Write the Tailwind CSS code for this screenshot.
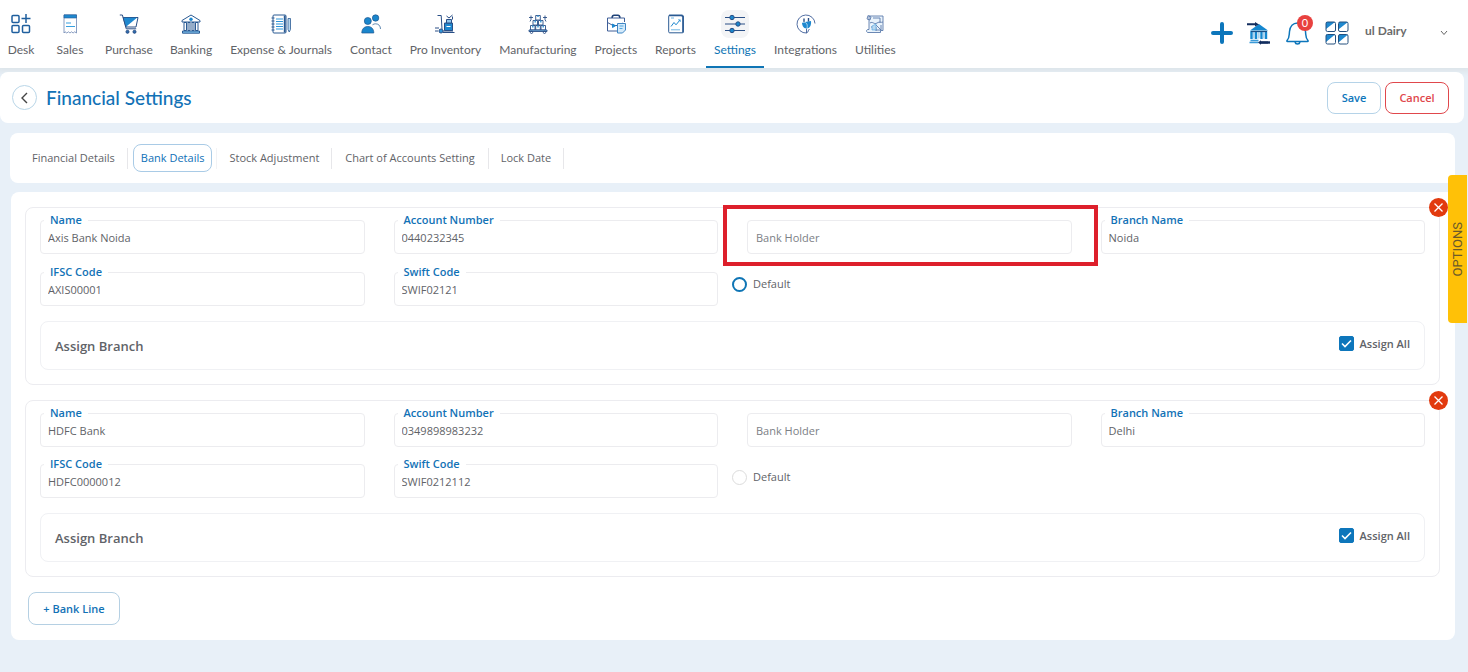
<!DOCTYPE html>
<html lang="en">
<head>
<meta charset="utf-8">
<meta name="viewport" content="width=device-width, initial-scale=1">
<title>Financial Settings</title>
<script src="https://cdn.jsdelivr.net/npm/@tailwindcss/browser@4"></script>
</head>
<body class="min-h-screen bg-[#e8f0f8] font-['Open_Sans','Noto_Sans',sans-serif] text-[11px] leading-4 text-[#5f6368]">

<header class="flex h-[68px] justify-between bg-white font-[Lato,sans-serif] text-[12px] shadow-[0_0_6px_4px_#dde5ea]">
  <nav aria-label="Main" class="flex gap-[2px]">
    <a href="#" class="flex flex-col items-center gap-1 px-[7px] pt-[10px]">
      <span class="grid size-7 place-items-center"><svg class="size-5" viewBox="0 0 20 20" fill="none" stroke="#1f5f9e" stroke-width="1.500"><rect x="1" y="1.500" width="7" height="7" rx="1"/><rect x="1" y="11.500" width="7" height="7" rx="1"/><rect x="11.500" y="11.500" width="7" height="7" rx="1"/><path d="M15 0v9M10.500 4.500h9"/></svg></span>Desk</a>
    <a href="#" class="flex flex-col items-center gap-1 px-3 pt-[10px]">
      <span class="grid size-7 place-items-center"><svg class="size-5" viewBox="0 0 20 20" fill="none"><path d="M4 1h12.500v18l-1.800-1.200-1.600 1.200-1.600-1.200L10 19l-1.600-1.200L6.800 19 5 17.800 4 19z" stroke="#6d87b3" stroke-width=".8"/><path d="M4 .8h12.500V4H4z" fill="#1e88cf" stroke="#2a5a93" stroke-width=".6"/><path d="M6 9h5M6 12.500h9" stroke="#37a0e0" stroke-width="1.200"/></svg></span>Sales</a>
    <a href="#" class="flex flex-col items-center gap-1 px-[7px] pt-[10px]">
      <span class="grid size-7 place-items-center"><svg class="size-5" viewBox="0 0 20 20" fill="none" stroke="#2a4f86" stroke-width="1"><path d="M4.200 3.500h14.800l-2 9.500H7z"/><path d="M4.500 3.800h13.500L7 12.800z" fill="#1e88cf" stroke="none"/><path d="M.8 1h2.600l3.800 13.800h10"/><circle cx="8.500" cy="17.800" r="1.500" fill="#2a6cb0"/><circle cx="15.500" cy="17.800" r="1.500" fill="#2a6cb0"/></svg></span>Purchase</a>
    <a href="#" class="flex flex-col items-center gap-1 px-2 pt-[10px]">
      <span class="grid size-7 place-items-center"><svg class="size-5" viewBox="0 0 20 20" fill="none" stroke="#2a5a93" stroke-width="1"><path d="M1 8V6.500l9-5.500 9 5.500V8z"/><circle cx="10" cy="5.300" r="1.700" fill="#1e88cf" stroke="none"/><path d="M3 8.500h2.500v8H3zM7 8.500h2v8H7zM11 8.500h2v8h-2zM14.500 8.500H17v8h-2.500z"/><path d="M1.500 17h17v2.200h-17z" fill="#7cc0ec"/></svg></span>Banking</a>
    <a href="#" class="flex flex-col items-center gap-1 px-2 pt-[10px]">
      <span class="grid size-7 place-items-center"><svg class="size-5" viewBox="0 0 20 20" fill="none" stroke="#2a5a93" stroke-width="1"><rect x="2" y="1" width="13" height="18" rx="1"/><path d="M13.700 1.500v17" stroke-width="1.800"/><path d="M5 5h7M5 7.500h7M5 10h7M5 12.500h7M5 15h7" stroke="#2f95d8"/><path d="M.5 4h3M.5 7h3M.5 10h3M.5 13h3M.5 16h3"/><path d="M17 4.500h2.500v11L18.200 18 17 15.500z" stroke-width=".8" fill="#b9d8f0"/></svg></span>Expense &amp; Journals</a>
    <a href="#" class="flex flex-col items-center gap-1 px-2 pt-[10px]">
      <span class="grid size-7 place-items-center"><svg class="size-5" viewBox="0 0 20 20" fill="#1a86cc" stroke="#20588f" stroke-width=".7"><circle cx="14.600" cy="4" r="3.200"/><circle cx="6.800" cy="7" r="3.500"/><path d="M.8 19c0-4 2.200-6.500 6-6.500s6 2.500 6 6.500z"/><path d="M11.500 10.800c1-.8 2-1 3.200-1 3 0 4.800 2.200 4.800 5.200" fill="none"/></svg></span>Contact</a>
    <a href="#" class="flex flex-col items-center gap-1 px-2 pt-[10px]">
      <span class="grid size-7 place-items-center"><svg class="size-5" viewBox="0 0 20 20" fill="none" stroke="#2a4f86" stroke-width="1"><path d="M2.500 1.500h3.700l.8 13.500"/><circle cx="6" cy="17" r="2" fill="#2f95d8"/><path d="M8 18.500h11.500M0 14h4M0 17h3M8 17h10"/><path d="M9.500 9h8v7.500h-8z" fill="#1e88cf"/><path d="M11.500 5.500h5v3.500h-5z" fill="#8fc6ec"/><path d="M11.500 2l2.500 2 3.500-3M17.500 2.500v3"/><path d="M11.500 12.500h4" stroke="#fff"/></svg></span>Pro Inventory</a>
    <a href="#" class="flex flex-col items-center gap-1 px-2 pt-[10px]">
      <span class="grid size-7 place-items-center"><svg class="size-5" viewBox="0 0 20 20" fill="none" stroke="#2a4f86" stroke-width=".9"><path d="M7.700 1.500h4.600v4.500H7.700zM5 6.500h4.500V11H5zM10.500 6.500H15V11h-4.500zM2.500 11.500H7V16H2.500zM7.700 11.500h4.600V16H7.700zM13 11.500h4.500V16H13z"/><path d="M10 1.500V3M7.200 6.500v2M12.800 6.500v2M4.800 11.500v2M10 11.500v2M15.200 11.500v2" stroke="#2f95d8" stroke-width="1.400"/><path d="M1 16h18v1.500H1z" fill="#7cc0ec"/><circle cx="3.500" cy="18.300" r="1.200"/><circle cx="16.500" cy="18.300" r="1.200"/><path d="M1 3.500h4M3 1.500v4l-1 2M15 3.500h4M17 1.500v4l1 2"/></svg></span>Manufacturing</a>
    <a href="#" class="flex flex-col items-center gap-1 px-2 pt-[10px]">
      <span class="grid size-7 place-items-center"><svg class="size-5" viewBox="0 0 20 20" fill="none" stroke="#3f5f98" stroke-width="1"><path d="M11 17H1.500V4h17v4"/><path d="M6 3.800C6.300 1.800 7 1.300 8 1.300h4c1 0 1.700.5 2 2.500" stroke="#1f4378" stroke-width="1.600"/><path d="M1.500 8.500L7 11.500h6L17 9" /><path d="M6.500 10l3 1.700-3 1.800z" fill="#1e88cf" stroke="#1e88cf"/><path d="M11.500 9.500h8V16l-3 3h-5z" fill="#d4eafa" stroke="#3f86c4"/><path d="M13.500 12h4M13.500 14.500h3" stroke="#2f95d8" stroke-width=".8"/></svg></span>Projects</a>
    <a href="#" class="flex flex-col items-center gap-1 px-2 pt-[10px]">
      <span class="grid size-7 place-items-center"><svg class="size-5" viewBox="0 0 20 20" fill="none" stroke="#2a5a93"><rect x="2.700" y="1.200" width="14.600" height="17.600" rx="1"/><path d="M3 1.500h12.500l1.500 1.200V18.500" stroke-width="1.600"/><path d="M5 12.500l3-4 2 2.300L14 6" stroke="#1e88cf"/><path d="M12 5.800h2.300V8M5 15.800h9M5 4h3" stroke="#4aa3dd" stroke-width=".8"/></svg></span>Reports</a>
    <a href="#" aria-current="page" class="flex flex-col items-center gap-1 border-b-2 border-[#0f75b5] px-2 pt-[10px] text-[#0f75b5]">
      <span class="grid size-7 place-items-center rounded-lg bg-[#f3f4f6]"><svg class="size-5" viewBox="0 0 20 20" fill="#1a86cc" stroke="#2a4f86" stroke-width="1"><path d="M0 3.500h20M0 10h20M0 16.500h20"/><circle cx="7" cy="3.500" r="2.200"/><circle cx="13" cy="10" r="2.200"/><circle cx="7" cy="16.500" r="2.200"/></svg></span>Settings</a>
    <a href="#" class="flex flex-col items-center gap-1 px-2 pt-[10px]">
      <span class="grid size-7 place-items-center"><svg class="size-5" viewBox="0 0 20 20" fill="none" stroke="#3f5f98" stroke-width=".9"><path d="M10.500 19v-4.500M10.500 19A9 9 0 1 1 19 9.500"/><path d="M10.500 19c2.500-1 1-2.500 3-4"/><path d="M6 8.500l9-1.500c.5 4-1.200 7.500-4.500 7.500S6 11 6 8.500z" fill="#1e88cf" stroke="none"/><path d="M8 4.500V8M12.500 4v3.500" stroke-width="1.400" stroke="#2a4f86"/><path d="M6 8.500c4-1 6 1 5 6" stroke="#fff" stroke-width=".6"/></svg></span>Integrations</a>
    <a href="#" class="flex flex-col items-center gap-1 px-2 pt-[10px]">
      <span class="grid size-7 place-items-center"><svg class="size-5" viewBox="0 0 20 20" fill="none" stroke="#5b7bab" stroke-width=".9"><path d="M4 2h14v14.500h-2.500V18.500H2.500c-1.500-1-1-2.500 0-3H4z" fill="#e9f3fb"/><path d="M3 1.500l3 1.500-1 3-3-1zM8 4h7v5M5 9c3-2 4 2 7 0s4 0 6-1M6 13h5v4M11 11l5 5M16 11v5h-5"/><path d="M7 12l4-2v6H7z" fill="#b9d8f0" stroke="#4aa3dd" stroke-width=".6"/></svg></span>Utilities</a>
  </nav>

  <div class="flex items-start pt-5 pr-5">
    <button type="button" aria-label="Add" class="mt-[2px] mr-[14px]"><svg class="size-[22px]" viewBox="0 0 22 22" stroke="#0d76bb" stroke-width="4" stroke-linecap="round"><path d="M11 2v18M2 11h18"/></svg></button>
    <button type="button" aria-label="Bank transfer" class="mt-[2px] mr-4"><svg class="size-[23px]" viewBox="0 0 23 23" fill="none"><path d="M3 8.500L12 2l9 6.500z" fill="#1587cf"/><path d="M4.500 9v8M9 9v8M14.500 9v8M19 9v8" stroke="#1587cf" stroke-width="2.400"/><path d="M7 9.500v7M11.700 9.500v7M16.800 9.500v7" stroke="#a9d3ef" stroke-width="2"/><path d="M4 9.500h16" stroke="#1b4f86" stroke-width="1.200"/><path d="M3.500 18.500h8M2.500 20.500h9" stroke="#3b9ad8" stroke-width="1.300"/><path d="M0 2.300h9M21 20.500h-8" stroke="#122d5e" stroke-width="2"/><path d="M8 0l4 2.400L8 4.500zM14 18.300l-3 2.200 3 2.300z" fill="#122d5e"/><path d="M14 20.500h9" stroke="#122d5e" stroke-width="2.400"/></svg></button>
    <button type="button" aria-label="Notifications" class="relative mt-[1px] mr-4"><svg class="h-6 w-[23px]" viewBox="0 0 23 24" fill="none" stroke="#0d76bb" stroke-width="1.500"><path d="M1.500 20.500c-.8 0-.8-.8-.3-1.300C3.500 17 3 15 3.500 10.500 4 5.500 7 2 11.500 2s7.500 3.500 8 8.500c.5 4.500 0 6.500 2.300 8.700.5.500.5 1.300-.3 1.300z"/><path d="M9 21c.3 1.500 1.200 2 2.500 2s2.200-.5 2.500-2"/></svg><span class="absolute -top-[6px] -right-[4px] grid size-4 place-items-center rounded-full bg-[#e8413f] text-[11px] text-white">0</span></button>
    <button type="button" aria-label="Apps" class="mt-px mr-4"><svg class="size-6" viewBox="0 0 24 24" fill="none" stroke="#24507f" stroke-width="1"><g fill="#1e88cf" stroke="none"><path d="M1 8V1h9zM14 8V1h9zM1 21v-7.500h9zM14 21v-7.500h9z"/></g><rect x="1" y="1" width="9.500" height="9.500" rx="1.500"/><rect x="13.500" y="1" width="9.500" height="9.500" rx="1.500"/><rect x="1" y="13.500" width="9.500" height="9.500" rx="1.500"/><rect x="13.500" y="13.500" width="9.500" height="9.500" rx="1.500"/></svg></button>
    <button type="button" class="mt-[3px] flex w-[83px] items-center justify-between font-bold text-[#6b6b6b]">ul Dairy<svg class="mt-1 size-2" viewBox="0 0 8 8" fill="none" stroke="#666"><path d="M1 2l3 3.500L7 2"/></svg></button>
  </div>
</header>

<section class="relative mt-1 mr-1 flex h-[51px] items-center justify-between rounded-lg bg-white pr-[15px] pl-3">
  <div class="flex items-center gap-[9px]">
    <button type="button" aria-label="Back" class="grid size-[25px] place-items-center rounded-full border border-[#b9d6e8]"><svg class="size-3" viewBox="0 0 12 12" fill="none" stroke="#444" stroke-width="1.400"><path d="M8 1L3 6l5 5"/></svg></button>
    <h1 class="font-[Lato,sans-serif] text-[19px] leading-6 font-medium text-[#1272b6]">Financial Settings</h1>
  </div>
  <div class="flex gap-1 font-semibold">
    <button type="button" class="h-8 w-[54px] rounded-lg border border-[#b5d3e8] text-[#0d76bb]">Save</button>
    <button type="button" class="h-8 w-16 rounded-lg border border-[#e0474c] text-[#e0474c]">Cancel</button>
  </div>
</section>

<nav aria-label="Financial settings" class="mt-[10px] mr-[13px] ml-[10px] flex h-[50px] items-center rounded-lg bg-white pl-[10px]">
  <a href="#" class="px-3">Financial Details</a>
  <span class="h-[21px] w-px bg-[#e7e7ea]"></span>
  <a href="#" aria-current="page" class="mr-1 ml-[5px] rounded-lg border border-[#a9cbe6] px-[7px] py-[5px] text-[#0f70b7]">Bank Details</a>
  <span class="h-[21px] w-px bg-[#f3f3f5]"></span>
  <a href="#" class="px-3">Stock Adjustment</a>
  <span class="h-[21px] w-px bg-[#e7e7ea]"></span>
  <a href="#" class="px-[13px]">Chart of Accounts Setting</a>
  <span class="h-[21px] w-px bg-[#e7e7ea]"></span>
  <a href="#" class="px-3">Lock Date</a>
  <span class="h-[21px] w-px bg-[#e7e7ea]"></span>
</nav>

<main class="mt-[9px] mr-[13px] mb-8 ml-[11px] flex flex-col gap-[15px] rounded-lg bg-white py-[15px] pr-[15px] pl-[14px]">

  <section aria-label="Axis Bank Noida" class="relative rounded-lg border border-[#ececf0] px-[14px] pt-3 pb-[14px]">
    <button type="button" aria-label="Remove Axis Bank Noida" class="absolute -top-[10px] -right-[9px] grid size-[19px] place-items-center rounded-full bg-[#e23a0e]"><svg class="size-[9px]" viewBox="0 0 9 9" stroke="#fff" stroke-width="1.300"><path d="M.5.5l8 8M8.500.5l-8 8"/></svg></button>
    <div class="grid grid-cols-4 gap-x-[29px] gap-y-[18px]">
      <div class="relative"><label for="n1" class="absolute -top-2 left-1 bg-white px-[6px] font-semibold text-[#1272b6]">Name</label><input id="n1" value="Axis Bank Noida" class="h-[34px] w-full rounded-[4px] border border-[#ececef] px-[7px]"></div>
      <div class="relative"><label for="a1" class="absolute -top-2 left-1 bg-white px-[6px] font-semibold text-[#1272b6]">Account Number</label><input id="a1" value="0440232345" class="h-[34px] w-full rounded-[4px] border border-[#ececef] px-[7px]"></div>
      <div class="relative"><div class="pointer-events-none absolute -top-[15px] -right-[26px] -bottom-3 -left-6 z-10 border-4 border-[#dd1f2b]"></div><input aria-label="Bank Holder" placeholder="Bank Holder" class="h-[34px] w-full rounded-[4px] border border-[#ececef] px-2 placeholder:text-[#7c8086]"></div>
      <div class="relative"><label for="b1" class="absolute -top-2 left-1 bg-white px-[6px] font-semibold text-[#1272b6]">Branch Name</label><input id="b1" value="Noida" class="h-[34px] w-full rounded-[4px] border border-[#ececef] px-[7px]"></div>
      <div class="relative"><label for="i1" class="absolute -top-2 left-1 bg-white px-[6px] font-semibold text-[#1272b6]">IFSC Code</label><input id="i1" value="AXIS00001" class="h-[34px] w-full rounded-[4px] border border-[#ececef] px-[7px]"></div>
      <div class="relative"><label for="s1" class="absolute -top-2 left-1 bg-white px-[6px] font-semibold text-[#1272b6]">Swift Code</label><input id="s1" value="SWIF02121" class="h-[34px] w-full rounded-[4px] border border-[#ececef] px-[7px]"></div>
      <label class="-ml-[15px] flex items-center gap-[6px] self-start pt-1"><input type="radio" name="default" class="size-[15px] appearance-none rounded-full border-2 border-[#0f75b5]">Default</label>
    </div>
    <div class="mt-[15px] flex h-[49px] items-center justify-between rounded-lg border border-[#f0f1f4] px-[14px]">
      <h2 class="text-[13px] font-semibold">Assign Branch</h2>
      <label class="flex items-center gap-[6px] pb-1 font-semibold"><span class="relative grid size-[15px]"><input type="checkbox" checked class="size-[15px] appearance-none rounded-[2px] border border-[#0d76bb] checked:bg-[#0d76bb]"><svg class="pointer-events-none absolute inset-0 size-[15px]" viewBox="0 0 15 15" fill="none" stroke="#fff" stroke-width="1.600"><path d="M3 7.500l3 3L12 4.500"/></svg></span>Assign All</label>
    </div>
  </section>

  <section aria-label="HDFC Bank" class="relative rounded-lg border border-[#ececf0] px-[14px] pt-3 pb-[14px]">
    <button type="button" aria-label="Remove HDFC Bank" class="absolute -top-[10px] -right-[9px] grid size-[19px] place-items-center rounded-full bg-[#e23a0e]"><svg class="size-[9px]" viewBox="0 0 9 9" stroke="#fff" stroke-width="1.300"><path d="M.5.5l8 8M8.500.5l-8 8"/></svg></button>
    <div class="grid grid-cols-4 gap-x-[29px] gap-y-[17px]">
      <div class="relative"><label for="n2" class="absolute -top-2 left-1 bg-white px-[6px] font-semibold text-[#1272b6]">Name</label><input id="n2" value="HDFC Bank" class="h-[34px] w-full rounded-[4px] border border-[#ececef] px-[7px]"></div>
      <div class="relative"><label for="a2" class="absolute -top-2 left-1 bg-white px-[6px] font-semibold text-[#1272b6]">Account Number</label><input id="a2" value="0349898983232" class="h-[34px] w-full rounded-[4px] border border-[#ececef] px-[7px]"></div>
      <div><input aria-label="Bank Holder" placeholder="Bank Holder" class="h-[34px] w-full rounded-[4px] border border-[#ececef] px-2 placeholder:text-[#7c8086]"></div>
      <div class="relative"><label for="b2" class="absolute -top-2 left-1 bg-white px-[6px] font-semibold text-[#1272b6]">Branch Name</label><input id="b2" value="Delhi" class="h-[34px] w-full rounded-[4px] border border-[#ececef] px-[7px]"></div>
      <div class="relative"><label for="i2" class="absolute -top-2 left-1 bg-white px-[6px] font-semibold text-[#1272b6]">IFSC Code</label><input id="i2" value="HDFC0000012" class="h-[34px] w-full rounded-[4px] border border-[#ececef] px-[7px]"></div>
      <div class="relative"><label for="s2" class="absolute -top-2 left-1 bg-white px-[6px] font-semibold text-[#1272b6]">Swift Code</label><input id="s2" value="SWIF0212112" class="h-[34px] w-full rounded-[4px] border border-[#ececef] px-[7px]"></div>
      <label class="-ml-[15px] flex items-center gap-[6px] self-start pt-[5px]"><input type="radio" name="default" class="size-[15px] appearance-none rounded-full border border-[#dcdcdc]">Default</label>
    </div>
    <div class="mt-[15px] flex h-[49px] items-center justify-between rounded-lg border border-[#f0f1f4] px-[14px]">
      <h2 class="text-[13px] font-semibold">Assign Branch</h2>
      <label class="flex items-center gap-[6px] pb-1 font-semibold"><span class="relative grid size-[15px]"><input type="checkbox" checked class="size-[15px] appearance-none rounded-[2px] border border-[#0d76bb] checked:bg-[#0d76bb]"><svg class="pointer-events-none absolute inset-0 size-[15px]" viewBox="0 0 15 15" fill="none" stroke="#fff" stroke-width="1.600"><path d="M3 7.500l3 3L12 4.500"/></svg></span>Assign All</label>
    </div>
  </section>

  <button type="button" class="ml-[3px] h-[33px] w-[92px] self-start rounded-lg border border-[#b5d0e3] font-semibold text-[#1272b6]">+ Bank Line</button>
</main>

<button type="button" class="fixed top-[175px] right-px grid h-[148px] w-[19px] place-items-center rounded-l-[4px] bg-[#ffc107] font-[Roboto,sans-serif] text-[13px] text-[#6b5a2a]"><span class="rotate-180 [writing-mode:vertical-rl]">OPTIONS</span></button>
</body>
</html>
